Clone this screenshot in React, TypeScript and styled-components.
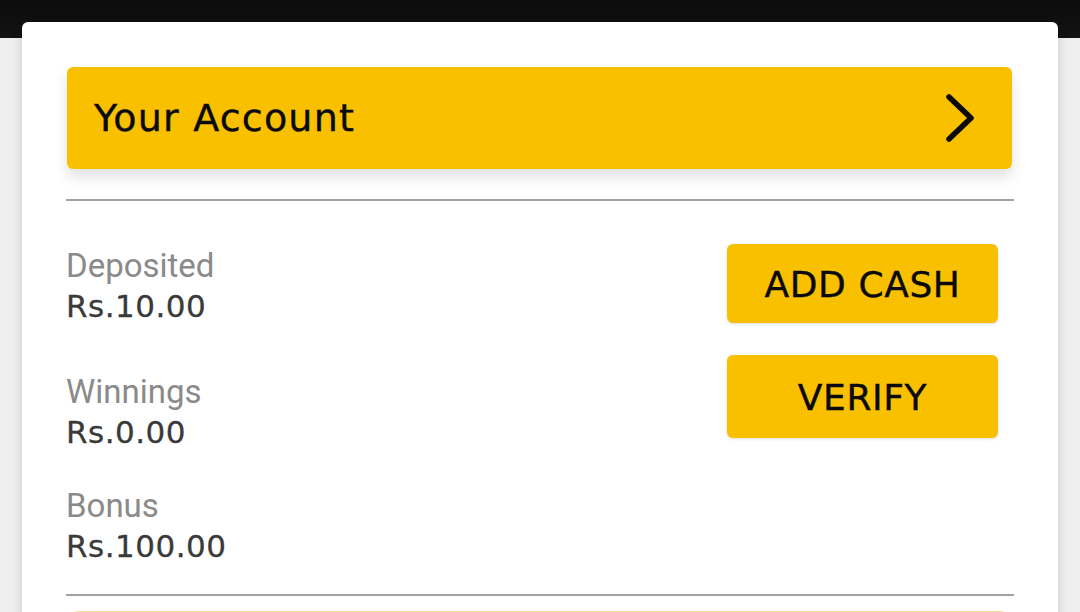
import React from "react";
import styled, { createGlobalStyle } from "styled-components";

const GlobalStyle = createGlobalStyle`
  html, body {
    margin: 0;
    padding: 0;
    background: #efefef;
    overflow: hidden;
  }
  * {
    box-sizing: border-box;
  }
`;

const YELLOW = "#f9c000";

const TopBar = styled.div`
  height: 38px;
  background: linear-gradient(180deg, #0b0c0b 0%, #121412 100%);
`;

const Card = styled.div`
  margin: -16px 22px 0 22px;
  min-height: 620px;
  background: #ffffff;
  border-radius: 6px 6px 0 0;
  box-shadow: 0 0 12px rgba(0, 0, 0, 0.16);
  padding: 45px 44px 0 44px;
  position: relative;
`;

const AccountHeader = styled.div`
  height: 102px;
  margin: 0 2px 0 1px;
  padding: 0 36px 0 27px;
  background: ${YELLOW};
  border-radius: 6px;
  box-shadow: 0 8px 14px rgba(0, 0, 0, 0.12);
  display: flex;
  align-items: center;
  justify-content: space-between;
`;

const Title = styled.div`
  font-family: "DejaVu Sans", sans-serif;
  font-size: 38px;
  line-height: 1;
  letter-spacing: 1.2px;
  color: #0a0a0a;
  -webkit-text-stroke: 0.4px #0a0a0a;
`;

const Divider = styled.div<{ $top: number }>`
  height: 2px;
  margin-top: ${(p) => p.$top}px;
  background: #a2a2a2;
`;

const Balances = styled.div`
  display: flex;
  justify-content: space-between;
  align-items: flex-start;
  padding-top: 43px;
`;

const BalanceList = styled.div`
  display: flex;
  flex-direction: column;
`;

const BalanceItem = styled.div<{ $gap: number }>`
  margin-top: ${(p) => p.$gap}px;
`;

const Label = styled.div`
  font-family: Roboto, "Liberation Sans", sans-serif;
  font-size: 33px;
  line-height: 40px;
  color: #8a8a8a;
`;

const Amount = styled.div`
  font-family: "DejaVu Sans", sans-serif;
  font-size: 31px;
  line-height: 40px;
  letter-spacing: 0.5px;
  color: #3a3a3a;
  -webkit-text-stroke: 0.3px #3a3a3a;
`;

const Actions = styled.div`
  display: flex;
  flex-direction: column;
  gap: 32px;
  margin-right: 16px;
`;

const ActionButton = styled.button<{ $h: number }>`
  width: 271px;
  height: ${(p) => p.$h}px;
  border: none;
  border-radius: 6px;
  background: ${YELLOW};
  box-shadow: 0 1px 3px rgba(0, 0, 0, 0.14);
  display: flex;
  align-items: center;
  justify-content: center;
  padding: 3px 0 0 0;
  font-family: "DejaVu Sans", sans-serif;
  font-size: 36px;
  line-height: 1;
  letter-spacing: 0.6px;
  color: #0a0a0a;
  -webkit-text-stroke: 0.4px #0a0a0a;
  cursor: pointer;
`;

const NextPanel = styled.div`
  height: 100px;
  margin: 15px 7px 0 6px;
  background: ${YELLOW};
  border-top: 1px solid #f3dc90;
  border-radius: 6px;
`;

const Chevron = () => (
  <svg width="32" height="52" viewBox="0 0 32 52" fill="none">
    <polyline
      points="5,5 27,26 5,47"
      stroke="#0a0a0a"
      strokeWidth="5.5"
      strokeLinecap="round"
      strokeLinejoin="round"
    />
  </svg>
);

const balances = [
  { label: "Deposited", amount: "Rs.10.00", gap: 2 },
  { label: "Winnings", amount: "Rs.0.00", gap: 46 },
  { label: "Bonus", amount: "Rs.100.00", gap: 34 },
];

export default function App() {
  return (
    <>
      <GlobalStyle />
      <TopBar />
      <Card>
        <AccountHeader>
          <Title>Your Account</Title>
          <Chevron />
        </AccountHeader>
        <Divider $top={30} />
        <Balances>
          <BalanceList>
            {balances.map((b) => (
              <BalanceItem key={b.label} $gap={b.gap}>
                <Label>{b.label}</Label>
                <Amount>{b.amount}</Amount>
              </BalanceItem>
            ))}
          </BalanceList>
          <Actions>
            <ActionButton $h={79}>ADD CASH</ActionButton>
            <ActionButton $h={83}>VERIFY</ActionButton>
          </Actions>
        </Balances>
        <Divider $top={28} />
        <NextPanel />
      </Card>
    </>
  );
}
